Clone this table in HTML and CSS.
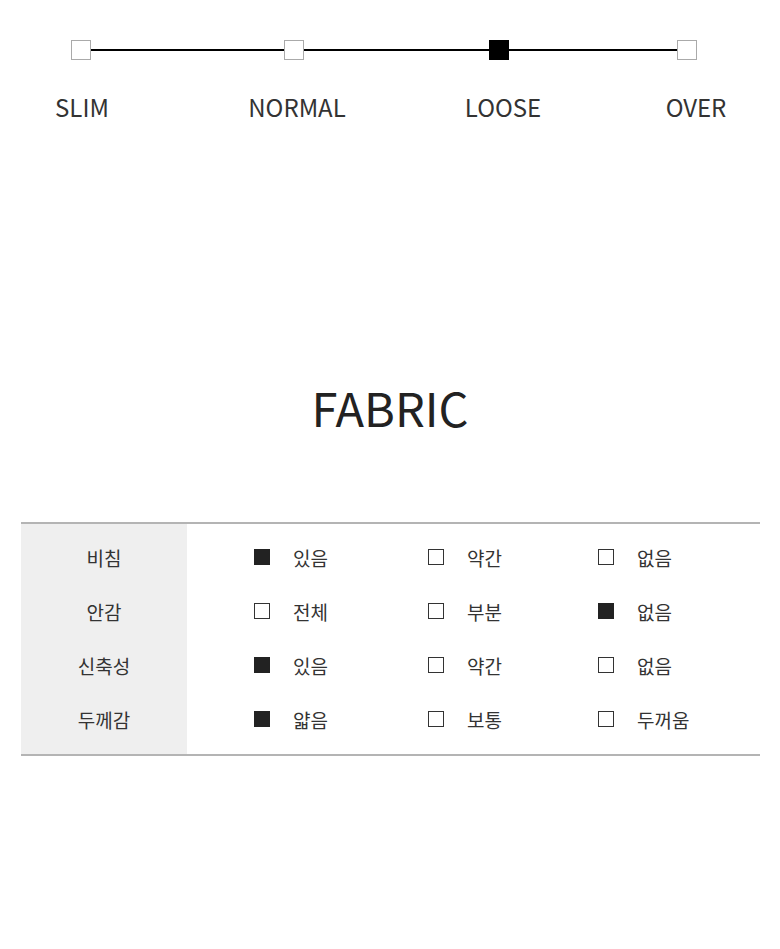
FILE: index.html
```html
<!DOCTYPE html>
<html lang="ko">
<head>
<meta charset="utf-8">
<link rel="stylesheet" href="styles.css">
</head>
<body>
<div class="page">
  <div class="scale">
    <span class="spacer"></span>
    <span class="dot"></span>
    <span class="track"></span>
    <span class="dot"></span>
    <span class="track"></span>
    <span class="dot dot-on"></span>
    <span class="track"></span>
    <span class="dot"></span>
  </div>
  <div class="scale-labels">
    <span class="lbl lbl-1">SLIM</span>
    <span class="lbl lbl-2">NORMAL</span>
    <span class="lbl lbl-3">LOOSE</span>
    <span class="lbl lbl-4">OVER</span>
  </div>

  <h2 class="title">FABRIC</h2>

  <div class="fabric">
    <div class="attrs">
      <div class="attr">비침</div>
      <div class="attr">안감</div>
      <div class="attr">신축성</div>
      <div class="attr">두께감</div>
    </div>
    <div class="values">
      <div class="val-row">
        <span class="opt"><i class="box box-on"></i>있음</span>
        <span class="opt"><i class="box"></i>약간</span>
        <span class="opt"><i class="box"></i>없음</span>
      </div>
      <div class="val-row">
        <span class="opt"><i class="box"></i>전체</span>
        <span class="opt"><i class="box"></i>부분</span>
        <span class="opt"><i class="box box-on"></i>없음</span>
      </div>
      <div class="val-row">
        <span class="opt"><i class="box box-on"></i>있음</span>
        <span class="opt"><i class="box"></i>약간</span>
        <span class="opt"><i class="box"></i>없음</span>
      </div>
      <div class="val-row">
        <span class="opt"><i class="box box-on"></i>얇음</span>
        <span class="opt"><i class="box"></i>보통</span>
        <span class="opt"><i class="box"></i>두꺼움</span>
      </div>
    </div>
  </div>
</div>
</body>
</html>
```

FILE: styles.css
```css
html, body {
  margin: 0;
  padding: 0;
  background: #fff;
}
body {
  font-family: "Noto Sans CJK KR", "Noto Sans", sans-serif;
  color: #333;
}
.page {
  width: 780px;
  padding-top: 40px;
}
.scale {
  display: grid;
  grid-template-columns: 71px 20px 193px 20px 185px 20px 168px 20px;
  align-items: center;
  height: 20px;
}
.dot {
  box-sizing: border-box;
  width: 20px;
  height: 20px;
  border: 1px solid #aaa;
  background: #fff;
}
.dot-on {
  background: #000;
  border-color: #000;
}
.track {
  height: 2px;
  background: #000;
}
.scale-labels {
  display: flex;
  margin-top: 35px;
  font-size: 24px;
  line-height: 24px;
  color: #333;
}
.lbl {
  width: 120px;
  text-align: center;
}
.lbl-1 { margin-left: 22px; }
.lbl-2 { margin-left: 95px; }
.lbl-3 { margin-left: 86px; }
.lbl-4 { margin-left: 73px; }
.title {
  margin: 264px 0 0;
  font-size: 47px;
  line-height: 48px;
  font-weight: 400;
  text-align: center;
  color: #222;
}
.fabric {
  display: grid;
  grid-template-columns: 166px 1fr;
  margin: 91px 20px 0 21px;
  border-top: 2px solid #b4b4b4;
  border-bottom: 2px solid #b4b4b4;
  font-size: 19px;
  color: #333;
}
.attrs {
  background: #efefef;
  padding: 6px 0 8px;
}
.values {
  padding: 6px 0 8px;
}
.attr {
  height: 54px;
  display: flex;
  align-items: center;
  justify-content: center;
}
.val-row {
  height: 54px;
  display: grid;
  grid-template-columns: 174px 170px 1fr;
  align-items: center;
  padding-left: 67px;
}
.opt {
  display: flex;
  align-items: center;
}
.box {
  box-sizing: border-box;
  width: 16px;
  height: 16px;
  border: 1px solid #333;
  background: #fff;
  margin-right: 23px;
  flex: none;
}
.box-on {
  background: #222;
  border-color: #222;
}
```
